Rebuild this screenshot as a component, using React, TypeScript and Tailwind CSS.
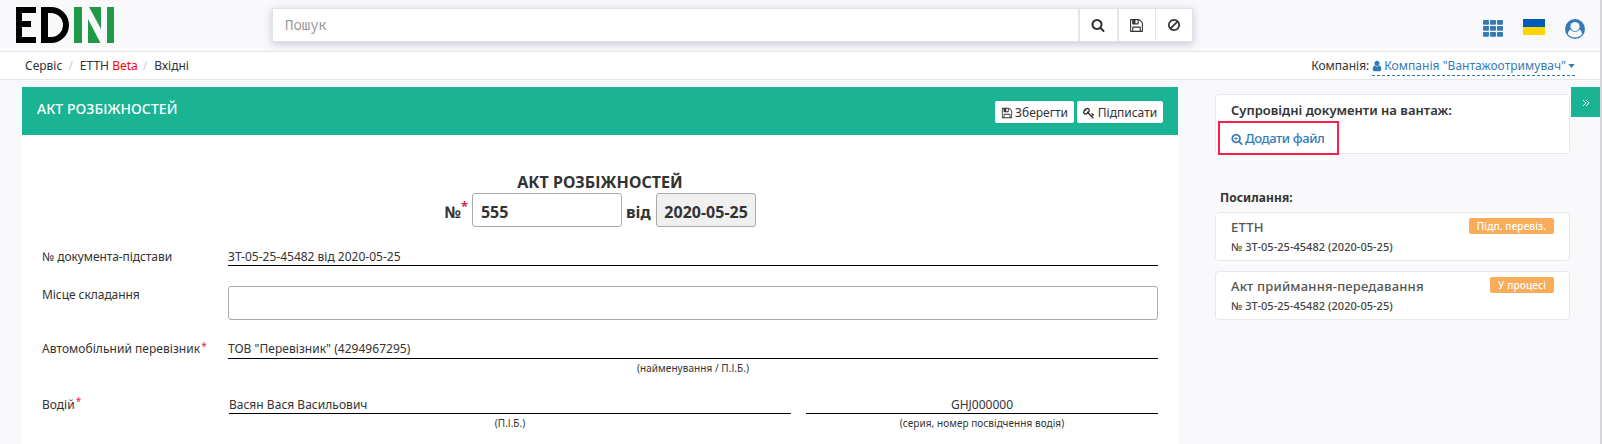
import React from "react";

const PATHS = {
  search:
    "M1216 832q0-185-131.5-316.5t-316.5-131.5-316.5 131.5-131.5 316.5 131.5 316.5 316.5 131.5 316.5-131.5 131.5-316.5zm512 832q0 52-38 90t-90 38q-54 0-90-38l-343-342q-179 124-399 124-143 0-273.5-55.5t-225-150-150-225-55.5-273.5 55.5-273.5 150-225 225-150 273.5-55.5 273.5 55.5 225 150 150 225 55.5 273.5q0 220-124 399l343 343q37 37 37 90z",
  searchPlus:
    "M1024 800v64q0 13-9.5 22.5t-22.5 9.5h-192v192q0 13-9.5 22.5t-22.5 9.5h-64q-13 0-22.5-9.5t-9.5-22.5v-192h-192q-13 0-22.5-9.5t-9.5-22.5v-64q0-13 9.5-22.5t22.5-9.5h192v-192q0-13 9.5-22.5t22.5-9.5h64q13 0 22.5 9.5t9.5 22.5v192h192q13 0 22.5 9.5t9.5 22.5zm192 32q0-185-131.5-316.5t-316.5-131.5-316.5 131.5-131.5 316.5 131.5 316.5 316.5 131.5 316.5-131.5 131.5-316.5zm512 832q0 52-38 90t-90 38q-54 0-90-38l-343-342q-179 124-399 124-143 0-273.5-55.5t-225-150-150-225-55.5-273.5 55.5-273.5 150-225 225-150 273.5-55.5 273.5 55.5 225 150 150 225 55.5 273.5q0 220-124 399l343 343q37 37 37 90z",
  save:
    "M512 1536h768v-384h-768v384zm896 0h128v-896q0-14-10-38.5t-20-34.5l-281-281q-10-10-34-20t-39-10v416q0 40-28 68t-68 28h-576q-40 0-68-28t-28-68v-416h-128v1280h128v-416q0-40 28-68t68-28h832q40 0 68 28t28 68v416zm-384-928v-320q0-13-9.5-22.5t-22.5-9.5h-192q-13 0-22.5 9.5t-9.5 22.5v320q0 13 9.5 22.5t22.5 9.5h192q13 0 22.5-9.5t9.5-22.5zm640 32v928q0 40-28 68t-68 28h-1344q-40 0-68-28t-28-68v-1344q0-40 28-68t68-28h928q40 0 88 20t76 48l280 280q28 28 48 76t20 88z",
  ban:
    "M1440 893q0-161-87-295l-754 753q137 89 297 89 111 0 211.5-43.5t173.5-116.5 116-174.5 43-212.5zm-999 299l755-754q-135-91-300-91-148 0-273 73t-198 199-73 274q0 162 89 299zm1223-299q0 157-61 300t-163.5 246-245 164-298.5 61-298.5-61-245-164-163.5-246-61-300 61-299.5 163.5-245.5 245-164 298.5-61 298.5 61 245 164 163.5 245.5 61 299.5z",
  key:
    "M832 512q0-80-56-136t-136-56-136 56-56 136q0 42 19 83-41-19-83-19-80 0-136 56t-56 136 56 136 136 56 136-56 56-136q0-42-19-83 41 19 83 19 80 0 136-56t56-136zm851 704q0 17-49 66t-66 49q-9 0-28.5-16t-36.5-33-38.5-40-24.5-26l-96 96 220 220q28 28 28 68 0 42-39 81t-81 39q-40 0-68-28l-671-671q-176 131-365 131-163 0-265.5-102.5t-102.5-265.5q0-160 95-313t248-248 313-95q163 0 265.5 102.5t102.5 265.5q0 189-131 365l355 355 96-96q-3-3-26-24.5t-40-38.5-33-36.5-16-28.5q0-17 49-66t66-49q13 0 23 10 6 6 46 44.5t82 79.5 86.5 86 73 78 28.5 41z",
  user:
    "M1536 1399q0 109-62.5 187t-150.5 78h-854q-88 0-150.5-78t-62.5-187q0-85 8.5-160.5t31.5-152 58.5-131 94-89 134.5-34.5q131 128 313 128t313-128q76 0 134.5 34.5t94 89 58.5 131 31.5 152 8.5 160.5zm-256-887q0 159-112.5 271.5t-271.5 112.5-271.5-112.5-112.5-271.5 112.5-271.5 271.5-112.5 271.5 112.5 112.5 271.5z",
};

function Icon({ name, className }: { name: keyof typeof PATHS; className: string }) {
  return (
    <svg viewBox="0 0 1792 1792" fill="currentColor" className={className}>
      <path d={PATHS[name]} />
    </svg>
  );
}

function Logo() {
  return (
    <svg viewBox="0 0 98 36" className="ml-4 mt-[7px] h-9 w-[98px] shrink-0">
      <path d="M0 0H20V6H6V14H15V20H6V30H20V36H0Z" fill="#000" />
      <path
        d="M25 0H35A18 18 0 0 1 35 36H25ZM32 6V30H35A12 12 0 0 0 35 6Z"
        fill="#000"
        fillRule="evenodd"
      />
      <path d="M58 0H66V36H58ZM73 0H85V22ZM72 12L84.500 36H72ZM91 0H98V36H91Z" fill="#219a48" />
    </svg>
  );
}

function Header() {
  return (
    <header className="flex h-[51px] items-start">
      <Logo />
      <div className="ml-[158px] mt-2 flex h-[34px] w-[921px] border border-[#e1e2e8] bg-white shadow-[0_2px_8px_rgba(100,105,150,0.35)]">
        <div className="flex-1 pl-3 font-['Noto_Sans_Mono','DejaVu_Sans_Mono',monospace] text-[14px] leading-8 text-[#999]">
          Пошук
        </div>
        <div className="flex w-[39px] items-center justify-center border-l-2 border-[#e5e6e7] pr-px">
          <Icon name="search" className="size-[14px]" />
        </div>
        <div className="flex w-[38px] items-center justify-center border-l-2 border-[#e5e6e7] pr-px">
          <Icon name="save" className="size-[15px]" />
        </div>
        <div className="flex w-[37px] items-center justify-center border-l border-[#e5e6e7] pr-px">
          <Icon name="ban" className="size-[14px]" />
        </div>
      </div>
      <div className="ml-auto mr-[15px] mt-[19px] flex items-start text-[#337ab7]">
        <svg viewBox="0 0 20 17" fill="currentColor" className="mt-px h-[17px] w-5">
          {[0, 6, 12].map((y) =>
            [0, 7, 14].map((x) => <rect key={`${x}-${y}`} x={x} y={y} width="6" height="4.700" rx="1" />)
          )}
        </svg>
        <div className="ml-5 flex h-4 w-[22px] flex-col">
          <div className="flex-1 bg-[#005bbb]" />
          <div className="flex-1 bg-[#ffd500]" />
        </div>
        <svg viewBox="0 0 20 20" className="ml-5 size-5">
          <circle cx="10" cy="10" r="10" fill="currentColor" />
          <path
            d="M2.800 14.700C3.500 11.800 4.900 10.300 7 10.300H13C15.100 10.300 16.500 11.800 17.200 14.700A8.600 8.600 0 0 1 2.800 14.700Z"
            fill="#f9f9fb"
          />
          <circle cx="10" cy="7.600" r="5.300" fill="currentColor" />
          <circle cx="10" cy="7.600" r="4.600" fill="#f9f9fb" />
        </svg>
      </div>
    </header>
  );
}

function Breadcrumbs() {
  return (
    <nav className="flex h-[29px] items-center border-y border-[#e5e6ea] bg-white pl-[25px] pr-[25px] text-[12px]">
      <span>Сервіс</span>
      <span className="ml-[6px] text-[#ccc]">/</span>
      <span className="ml-[7px]">
        ЕТТН <span className="text-[#f00]">Beta</span>
      </span>
      <span className="ml-[5px] text-[#ccc]">/</span>
      <span className="ml-[7px]">Вхідні</span>
      <span className="ml-auto mr-[3px]">Компанія:</span>
      <span className="mt-px flex h-[20px] items-center border-b border-dashed border-[#337ab7] text-[#337ab7]">
        <Icon name="user" className="-ml-px mr-px size-3" />
        <span className="tracking-[0.03px]">Компанія "Вантажоотримувач"</span>
        <svg viewBox="0 0 8 5" fill="currentColor" className="ml-[2px] h-[4px] w-[7px]">
          <path d="M0 0H8L4 5Z" />
        </svg>
      </span>
    </nav>
  );
}

const Star = ({ className }: { className: string }) => <span className={className}>*</span>;

function Field({ className, align, children }: { className: string; align?: string; children: React.ReactNode }) {
  return <div className={`border-b border-black ${className} ${align ?? ""}`}>{children}</div>;
}

function Act() {
  return (
    <main className="w-[1156px] bg-white">
      <div className="flex h-12 bg-[#1ab394] pl-[15px] pr-[15px] text-white">
        <h1 className="mt-[12px] text-[14px] font-medium leading-5 tracking-[0.06px]">АКТ РОЗБІЖНОСТЕЙ</h1>
        <div className="ml-auto mt-[14px] flex gap-[3px] text-[12px] text-[#333]">
          <button className="flex h-[22px] w-[79px] items-center justify-center rounded-[2px] bg-white pt-px">
            <Icon name="save" className="mr-[2px] size-3" />
            Зберегти
          </button>
          <button className="flex h-[22px] w-[86px] items-center justify-center rounded-[2px] bg-white pt-px">
            <Icon name="key" className="mr-[3px] size-3" />
            Підписати
          </button>
        </div>
      </div>
      <div className="pl-5 pr-5">
        <div className="pt-[36px] text-center text-[16px] font-bold leading-[23px] tracking-[0.06px]">АКТ РОЗБІЖНОСТЕЙ</div>
        <div className="-mt-px flex h-[34px] justify-center text-[16px] font-bold leading-[38px]">
          <span className="flex">
            №<Star className="-mt-[6px] mr-[4px] text-[13px] text-[#e2234d]" />
          </span>
          <div className="w-[150px] rounded-[3px] border border-[#aaa] pl-2 leading-[36px]">555</div>
          <span className="ml-1 mr-[5px]">від</span>
          <div className="w-[100px] rounded-[3px] border border-[#aaa] bg-[#f0f0f0] pl-px text-center leading-[36px]">
            2020-05-25
          </div>
        </div>
        <div className="mt-[20px] flex h-[19px] leading-5">
          <span className="w-[186px] tracking-[-0.08px]">№ документа-підстави</span>
          <Field className="h-[19px] flex-1">ЗТ-05-25-45482 від 2020-05-25</Field>
        </div>
        <div className="mt-[20px] flex h-[34px] leading-[18px]">
          <span className="w-[186px] tracking-[-0.06px]">Місце складання</span>
          <div className="flex-1 rounded-[3px] border border-[#aaa]" />
        </div>
        <div className="mt-[20px] flex leading-[18px]">
          <span className="flex w-[186px] tracking-[0.04px]">
            Автомобільний перевізник
            <Star className="-mt-[3px] ml-px text-[10px] text-[#e2234d]" />
          </span>
          <div className="flex-1">
            <Field className="h-[19px] tracking-[0.03px]">ТОВ "Перевізник" (4294967295)</Field>
            <div className="text-center text-[10px] leading-[18px] tracking-[0.05px]">(найменування / П.І.Б.)</div>
          </div>
        </div>
        <div className="mt-[18px] flex leading-[18px]">
          <span className="flex w-[187px] pt-px">
            Водій
            <Star className="-mt-[4px] ml-px text-[10px] text-[#e2234d]" />
          </span>
          <div className="w-[562px]">
            <Field className="h-[19px] pt-px tracking-[0.03px]">Васян Вася Васильович</Field>
            <div className="text-center text-[10px] leading-[18px]">(П.І.Б.)</div>
          </div>
          <div className="ml-auto w-[352px]">
            <Field className="h-[19px] pt-px" align="text-center">GHJ000000</Field>
            <div className="text-center text-[10px] leading-[18px] tracking-[0.06px]">(серия, номер посвідчення водія)</div>
          </div>
        </div>
      </div>
    </main>
  );
}

function DocumentCard({ title, status }: { title: string; status: string }) {
  return (
    <div className="flex h-[49px] w-[355px] justify-between rounded-[4px] border border-[#e7e8ec] bg-white pl-[15px] pr-[15px] text-[#444]">
      <div>
        <div className="mt-[5px] text-[13px] font-medium leading-[18px] tracking-[0.18px] text-[#555]">{title}</div>
        <div className="mt-[3px] text-[11px] font-medium leading-4 tracking-[0.04px]">№ ЗТ-05-25-45482 (2020-05-25)</div>
      </div>
      <span className="mt-[5px] h-4 rounded-[2px] bg-[#f8ac59] px-2 text-[10px] font-medium leading-4 tracking-[0.12px] text-white">
        {status}
      </span>
    </div>
  );
}

function Sidebar() {
  return (
    <aside className="ml-[37px] flex flex-col">
      <section className="mt-[7px] flex h-[60px] w-[355px] flex-col items-start rounded-[4px] border border-[#e7e8ec] bg-white pl-[2px]">
        <div className="ml-[13px] mt-[6px] text-[13px] font-semibold leading-[18px]">Супровідні документи на вантаж:</div>
        <div className="mt-[2px] flex h-[34px] w-[121px] shrink-0 items-center border-2 border-[#fd1d4b] pl-[11px] pt-px text-[13px] font-medium tracking-[-0.4px] text-[#337ab7]">
          <Icon name="searchPlus" className="mr-[2px] size-3" />
          Додати файл
        </div>
      </section>
      <h2 className="mb-[5px] ml-[5px] mt-[35px] text-[12px] font-bold leading-[18px] tracking-[0.08px]">Посилання:</h2>
      <div className="flex flex-col gap-[10px]">
        <DocumentCard title="ЕТТН" status="Підп. перевіз." />
        <DocumentCard title="Акт приймання-передавання" status="У процесі" />
      </div>
    </aside>
  );
}

export default function App() {
  return (
    <div className="flex h-[444px] overflow-hidden bg-[#f9f9fb] font-['Noto_Sans','Open_Sans',sans-serif] text-[12px] text-[#333]">
      <div className="flex min-w-0 flex-1 flex-col">
        <Header />
        <Breadcrumbs />
        <div className="flex flex-1 pl-[22px] pt-[7px]">
          <Act />
          <Sidebar />
          <div className="ml-auto flex h-[30px] w-[29px] items-center justify-center bg-[#1ab394] pt-[2px] text-white">
            <svg viewBox="0 0 8 8" fill="none" stroke="currentColor" strokeWidth="1" className="size-2">
              <path d="M1 1L4 4L1 7M4 1L7 4L4 7" />
            </svg>
          </div>
        </div>
      </div>
      <div className="w-[2px] bg-[#d5d5d8]" />
    </div>
  );
}
